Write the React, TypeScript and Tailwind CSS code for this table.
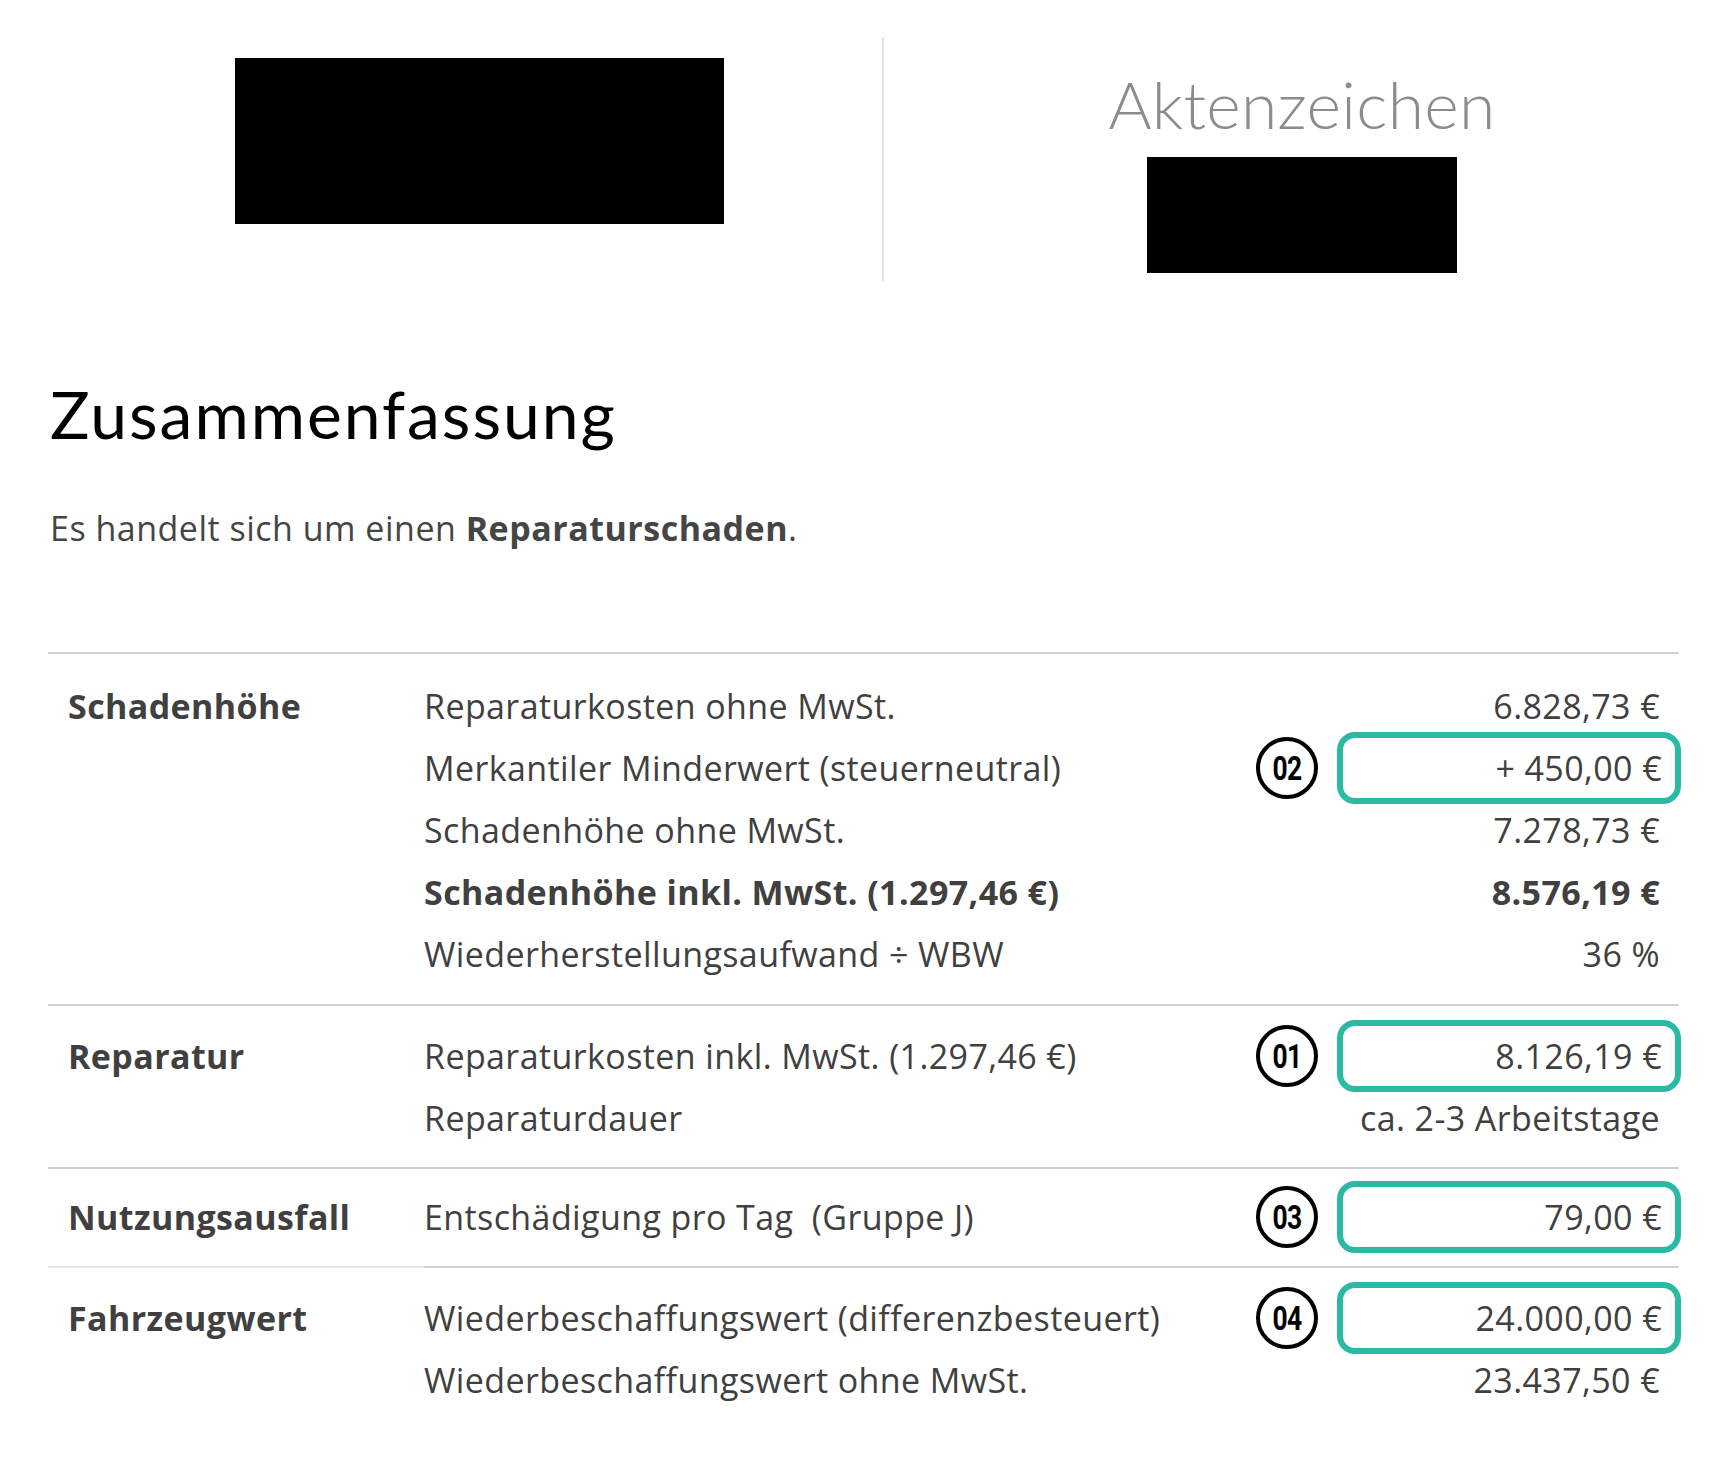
const font = { fontFamily: "'Open Sans', Lato, sans-serif" };
const heading = { fontFamily: "Lato, 'Open Sans', sans-serif" };

type Row = {
  text: React.ReactNode;
  value: string;
  bold?: boolean;
  badge?: string;
};

type Section = {
  label: string;
  rows: Row[];
  pad: string;
  labelLine: string;
};

const sections: Section[] = [
  {
    label: "Schadenhöhe",
    pad: "pt-[21px] pb-[19px]",
    labelLine: "border-[#cfcfcf]",
    rows: [
      { text: "Reparaturkosten ohne MwSt.", value: "6.828,73 €" },
      { text: "Merkantiler Minderwert (steuerneutral)", value: "+ 450,00 €", badge: "02" },
      { text: "Schadenhöhe ohne MwSt.", value: "7.278,73 €" },
      { text: "Schadenhöhe inkl. MwSt. (1.297,46 €)", value: "8.576,19 €", bold: true },
      { text: "Wiederherstellungsaufwand ÷ WBW", value: "36 %" },
    ],
  },
  {
    label: "Reparatur",
    pad: "pt-[19px] pb-[18px]",
    labelLine: "border-[#cfcfcf]",
    rows: [
      { text: "Reparaturkosten inkl. MwSt. (1.297,46 €)", value: "8.126,19 €", badge: "01" },
      { text: "Reparaturdauer", value: "ca. 2-3 Arbeitstage" },
    ],
  },
  {
    label: "Nutzungsausfall",
    pad: "pt-[17px] pb-[18px]",
    labelLine: "border-[#cfcfcf]",
    rows: [
      { text: "Entschädigung pro Tag\u00a0 (Gruppe J)", value: "79,00 €", badge: "03" },
    ],
  },
  {
    label: "Fahrzeugwert",
    pad: "pt-[19px] pb-[16px]",
    labelLine: "border-[#e4e4e4]",
    rows: [
      { text: "Wiederbeschaffungswert (differenzbesteuert)", value: "24.000,00 €", badge: "04" },
      { text: "Wiederbeschaffungswert ohne MwSt.", value: "23.437,50 €" },
    ],
  },
];

function Badge({ n }: { n: string }) {
  return (
    <div className="w-[62px] h-[62px] rounded-full border-[4px] border-black flex items-center justify-center shrink-0">
      <span
        className="text-[33px] font-bold text-black tracking-[-1px] leading-none scale-x-[0.8]"
        style={{ fontFamily: "Roboto, 'Liberation Sans', sans-serif" }}
      >
        {n}
      </span>
    </div>
  );
}

function TableRow({ row }: { row: Row }) {
  return (
    <div className="flex items-center h-[62px]">
      <div className={`flex-1 leading-none ${row.bold ? "font-bold" : ""}`}>{row.text}</div>
      <div className="w-[62px] flex justify-center">{row.badge && <Badge n={row.badge} />}</div>
      <div className="w-[19px]" />
      {row.badge ? (
        <div className="w-[344px] h-[72px] -mr-[2px] rounded-[18px] border-[6px] border-[#2bb9a4] flex items-center justify-end pr-[13px] leading-none">
          {row.value}
        </div>
      ) : (
        <div className={`w-[342px] flex justify-end pr-[19px] leading-none ${row.bold ? "font-bold" : ""}`}>
          {row.value}
        </div>
      )}
    </div>
  );
}

export default function App() {
  return (
    <div className="w-[1736px] min-h-[1471px] bg-white" style={font}>
      {/* header */}
      <div className="flex pl-[48px] pt-[37px]">
        <div className="w-[834px] flex justify-center pl-[28px]">
          <div className="mt-[21px] w-[489px] h-[166px] bg-black" />
        </div>
        <div className="w-[2px] h-[244px] bg-[#e3e3e3]" />
        <div className="w-[836px] flex flex-col items-center" style={heading}>
          <div className="mt-[34px] text-[66px] font-light leading-none text-[#8c8c8c] tracking-[0.3px]">Aktenzeichen</div>
          <div className="mt-[20px] w-[310px] h-[116px] bg-black" />
        </div>
      </div>

      <div className="px-[48px] w-[1727px]">
        <h1 className="mt-[100px] pl-[2px] text-[66px] font-normal leading-none text-black tracking-[2px]" style={heading}>
          Zusammenfassung
        </h1>
        <p className="mt-[64px] pl-[2px] text-[34px] leading-none text-[#454545] tracking-[0.5px]">
          Es handelt sich um einen <span className="font-bold">Reparaturschaden</span>.
        </p>

        <div className="mt-[107px] text-[34px] text-[#404040] tracking-[0.4px]">
          {sections.map((s) => (
            <div key={s.label} className="grid grid-cols-[376px_1fr]">
              <div className={`border-t-2 ${s.labelLine} pl-[20px] ${s.pad}`}>
                <div className="h-[62px] flex items-center font-bold leading-none">{s.label}</div>
              </div>
              <div className={`border-t-2 border-[#cfcfcf] ${s.pad}`}>
                {s.rows.map((r, i) => (
                  <TableRow key={i} row={r} />
                ))}
              </div>
            </div>
          ))}
        </div>
      </div>
    </div>
  );
}
